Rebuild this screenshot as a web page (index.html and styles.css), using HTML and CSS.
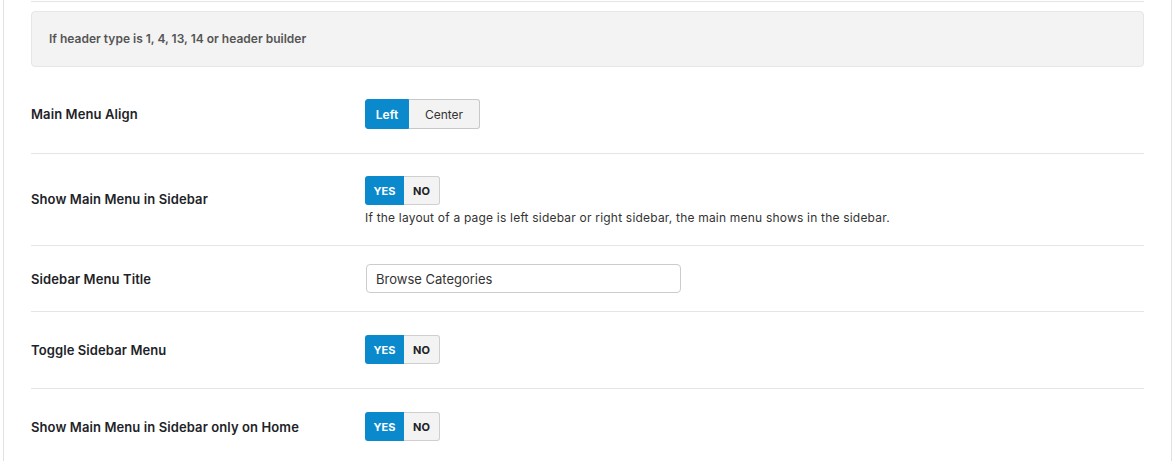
FILE: index.html
```html
<!DOCTYPE html>
<html lang="en">
<head>
  <meta charset="UTF-8" />
  <title>Menu Options</title>
  <link rel="stylesheet" href="styles.css">
</head>
<body>
  <div class="panel">
    <div class="notice-wrap">
      <div class="notice">If header type is 1, 4, 13, 14 or header builder</div>
    </div>

    <div class="option option-first">
      <div class="option-label">Main Menu Align</div>
      <div class="option-field">
        <div class="btn-group">
          <button class="btn btn-left active">Left</button>
          <button class="btn btn-center">Center</button>
        </div>
      </div>
    </div>

    <div class="option option-desc-row">
      <div class="option-label">Show Main Menu in Sidebar</div>
      <div class="option-field">
        <div class="switch">
          <span class="switch-on">YES</span>
          <span class="switch-off">NO</span>
        </div>
        <p class="option-desc">If the layout of a page is left sidebar or right sidebar, the main menu shows in the sidebar.</p>
      </div>
    </div>

    <div class="option option-text">
      <div class="option-label">Sidebar Menu Title</div>
      <div class="option-field">
        <input type="text" class="text-input" value="Browse Categories">
      </div>
    </div>

    <div class="option">
      <div class="option-label">Toggle Sidebar Menu</div>
      <div class="option-field">
        <div class="switch">
          <span class="switch-on">YES</span>
          <span class="switch-off">NO</span>
        </div>
      </div>
    </div>

    <div class="option">
      <div class="option-label">Show Main Menu in Sidebar only on Home</div>
      <div class="option-field">
        <div class="switch">
          <span class="switch-on">YES</span>
          <span class="switch-off">NO</span>
        </div>
      </div>
    </div>
  </div>
</body>
</html>
```

FILE: styles.css
```css
body {
  margin: 0;
  background: #fff;
  font-family: Inter, "Open Sans", sans-serif;
  color: #222;
}
.panel {
  margin: 0 1px 0 3px;
  padding: 1px 27px 0;
  border-left: 1px solid #e2e2e2;
  border-right: 1px solid #e2e2e2;
  min-height: 460px;
}

/* info box above the menu options */
.notice-wrap {
  border-top: 1px solid #e5e5e5;
  padding: 9px 0;
}
.notice {
  background: #f3f3f3;
  border: 1px solid #e6e6e6;
  border-radius: 4px;
  height: 54px;
  line-height: 54px;
  padding-left: 17px;
  font-size: 12px;
  font-weight: 600;
  color: #555;
}

/* option rows */
.option {
  display: flex;
  align-items: center;
  padding: 23px 0 24px;
  border-top: 1px solid #e5e5e5;
}
.option-first {
  border-top: 0;
}
.option-desc-row {
  padding: 22px 0 19px;
}
.option-desc-row .option-label {
  margin-top: -4px;
}
.option-text {
  padding: 18px 0;
}
.option-label {
  width: 334px;
  flex-shrink: 0;
  font-size: 13px;
  line-height: 20px;
  font-weight: 600;
  letter-spacing: 0.1px;
  color: #1d2327;
}
.option-field {
  flex: 1;
}

.btn-group, .switch {
  display: inline-flex;
  vertical-align: top;
}
.btn {
  height: 30px;
  padding: 0;
  border: 1px solid #c8c8c8;
  background: #f3f3f3;
  color: #333;
  font-family: inherit;
  font-size: 12px;
}
.btn-left {
  width: 44px;
  border-radius: 3px 0 0 3px;
}
.btn-center {
  width: 71px;
  border-left: 0;
  border-radius: 0 3px 3px 0;
}
.btn.active {
  background: #0a8acd;
  border-color: #0a8acd;
  color: #fff;
  font-weight: 600;
}

.switch span {
  height: 29px;
  box-sizing: border-box;
  display: flex;
  align-items: center;
  justify-content: center;
  font-size: 11px;
  font-weight: 700;
}
.switch-on {
  width: 39px;
  background: #0a8acd;
  color: #fff;
  border-radius: 3px 0 0 3px;
}
.switch-off {
  width: 36px;
  background: #f3f3f3;
  color: #222;
  border: 1px solid #cfcfcf;
  border-left: 0;
  border-radius: 0 3px 3px 0;
}
.option-desc {
  margin: 5px 0 0;
  font-size: 12px;
  line-height: 16px;
  letter-spacing: 0.2px;
  color: #333;
}
.text-input {
  margin-left: 1px;
  width: 315px;
  height: 29px;
  box-sizing: border-box;
  padding: 0 9px;
  border: 1px solid #ccc;
  border-radius: 4px;
  font-family: inherit;
  font-size: 13px;
  color: #333;
}
```
